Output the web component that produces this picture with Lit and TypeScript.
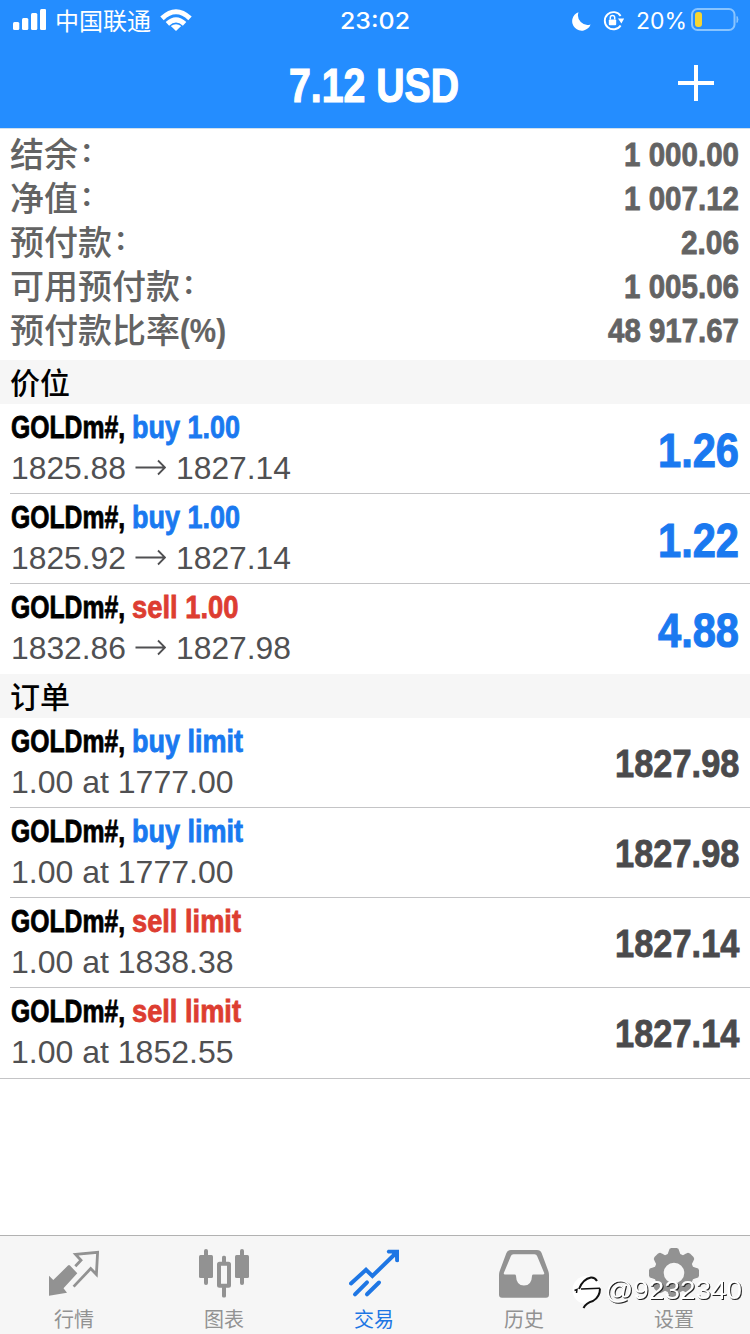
import { LitElement, html, svg, css } from "lit";
import { customElement, property } from "lit/decorators.js";

/** One run of text, set to an exact width so that condensed faces can be imitated. */
@customElement("fit-text")
class FitText extends LitElement {
  @property() text = "";
  @property({ type: Number }) size = 32;
  @property({ type: Number }) w = 100;
  @property({ type: Number }) h = 44;
  @property({ type: Number }) base = 34;
  static styles = css`
    :host { display: block; flex: none; }
    svg { display: block; overflow: visible; }
    text { fill: currentColor; stroke: currentColor; stroke-width: var(--embolden, 0); }
  `;
  render() {
    return html`<svg width=${this.w} height=${this.h}>
      <text x="0" y=${this.base} font-size=${this.size} textLength=${this.w} lengthAdjust="spacingAndGlyphs">${this.text}</text>
    </svg>`;
  }
}

const summary = [
  { label: "结余", value: "1 000.00", w: 115 },
  { label: "净值", value: "1 007.12", w: 115 },
  { label: "预付款", value: "2.06", w: 58 },
  { label: "可用预付款", value: "1 005.06", w: 115 },
  { label: "预付款比率", suffix: "(%)", value: "48 917.67", w: 131 },
];

const positions = [
  { side: "buy", vol: "1.00", w: 108, from: "1825.88", to: "1827.14", pl: "1.26" },
  { side: "buy", vol: "1.00", w: 108, from: "1825.92", to: "1827.14", pl: "1.22" },
  { side: "sell", vol: "1.00", w: 106.5, from: "1832.86", to: "1827.98", pl: "4.88" },
];

const orders = [
  { side: "buy", w: 111, at: "1777.00", price: "1827.98" },
  { side: "buy", w: 111, at: "1777.00", price: "1827.98" },
  { side: "sell", w: 109, at: "1838.38", price: "1827.14" },
  { side: "sell", w: 109, at: "1852.55", price: "1827.14" },
];

const gear = (() => {
  const pts: string[] = [];
  for (let i = 0; i < 8; i++) {
    const c = (i * Math.PI) / 4;
    for (const [d, r] of [[-0.32, 20], [-0.24, 22.4], [-0.18, 24.6], [-0.1, 25.2], [0.1, 25.2], [0.18, 24.6], [0.24, 22.4], [0.32, 20]]) {
      pts.push(`${(25 + r * Math.sin(c + d)).toFixed(2)} ${(25 - r * Math.cos(c + d)).toFixed(2)}`);
    }
  }
  return `M${pts.join("L")}ZM25 14.7a10.3 10.3 0 1 0 0 20.6a10.3 10.3 0 1 0 0-20.6Z`;
})();

const tabs = [
  {
    label: "行情",
    icon: svg`<path fill="currentColor" d="M0 27.7L4.3 32L19 17.6Q20 16.6 21 17.6L28.3 25.3L14.5 40.2L18 44.7L0 47.7Z"/>
      <path fill="none" stroke="currentColor" stroke-width="2.8" d="M26.3 18.2L32 12.2L26.6 6.4L48.6 4.4L47.4 26.4L41.7 20.6L24.6 38.6"/>`,
  },
  {
    label: "图表",
    icon: svg`<g fill="currentColor"><rect x="0" y="7" width="14" height="23" rx="1.5"/><rect x="5" y="1" width="4" height="36" rx="2"/>
      <rect x="36" y="7" width="14" height="23" rx="1.5"/><rect x="41" y="1" width="4" height="36" rx="2"/>
      <rect x="23" y="7.7" width="4" height="8" rx="1.5"/><rect x="23" y="38" width="4" height="11.5" rx="1.5"/></g>
      <rect x="20" y="15.7" width="10" height="22" rx=".5" fill="none" stroke="currentColor" stroke-width="4"/>`,
  },
  {
    label: "交易",
    active: true,
    icon: svg`<g fill="none" stroke="currentColor" stroke-width="4" stroke-linecap="round"><path d="M2 35.5L17 21.8L23.4 28L46 6"/><path d="M6 46.3L18 34.3M18 46.3L30 34.5"/></g>
      <path fill="currentColor" d="M39 1.8L50 1.8L50 13.5Q48 15 46.2 13.2L46 8.5L42.8 5.4L39 5.6Q36.5 3.6 39 1.8Z"/>`,
  },
  {
    label: "历史",
    icon: svg`<path fill="currentColor" fill-rule="evenodd" d="M12 2H38Q41.5 2 42.6 5L49.3 23Q50 25 50 27V46.5Q50 49.7 47 49.7H3Q0 49.7 0 46.5V27Q0 25 .7 23L7.4 5Q8.5 2 12 2ZM14.5 6.3Q12.5 6.3 11.8 8.3L4.8 25Q4.5 26.6 6 26.6H15.5Q17 26.6 17 28Q17.3 37.5 25 37.5Q32.7 37.5 33 28Q33 26.6 34.5 26.6H44Q45.5 26.6 45.2 25L38.2 8.3Q37.5 6.3 35.5 6.3Z"/>`,
  },
  { label: "设置", icon: svg`<path fill="currentColor" fill-rule="evenodd" d=${gear}/>` },
];

@customElement("app-root")
class AppRoot extends LitElement {
  static styles = css`
    :host {
      display: block;
      width: 750px;
      font-family: "Liberation Sans", "Noto Sans CJK SC", sans-serif;
      color: #000;
    }
    .screen { display: flex; flex-direction: column; height: 1334px; background: #fff; overflow: hidden; }
    .top { background: #248dff; height: 129px; color: #fff; border-bottom: 1px solid #cfe0ee; box-sizing: border-box; flex: none; }
    .status { display: grid; grid-template-columns: 1fr auto 1fr; height: 40px; font-family: "Inter", "Noto Sans CJK SC", sans-serif; }
    .left, .right { display: flex; align-items: center; height: 40px; }
    .left { padding-left: 13px; }
    .carrier { font-size: 24px; line-height: 36px; padding-top: 3px; margin: 0 9px; font-weight: 400; }
    .right { justify-content: flex-end; padding-right: 11px; }
    .status svg { display: block; flex: none; }
    .time { font-weight: 500; }
    .moon { margin-right: 12px; }
    .lock { margin-right: 12px; }
    .battery { margin-left: 4px; }
    .nav { display: grid; grid-template-columns: 1fr auto 1fr; height: 87px; }
    .nav-title { grid-column: 2; font-weight: 700; margin-right: 3px; --embolden: 1.2px; }
    .plus { justify-self: end; margin: 25px 36px 0 0; display: block; }
    .bold { font-weight: 700; --embolden: 0.8px; }
    .summary { padding: 3px 11px 8px 10px; color: #636363; flex: none; }
    .line { display: flex; justify-content: space-between; height: 44px; }
    .label { display: flex; font-size: 34px; line-height: 42px; font-family: "Noto Sans CJK SC", sans-serif; font-weight: 500; white-space: nowrap; }
    .colon { font-size: 27px; font-weight: 700; margin: -2px 0 0 2px; }
    .suffix { font-family: "Liberation Sans", sans-serif; --embolden: 0.2px; }
    .section { height: 44px; padding-left: 10px; background: #f6f6f6; font: 500 30px/42px "Noto Sans CJK SC", sans-serif; flex: none; }
    .row { display: flex; justify-content: space-between; height: 89px; margin-left: 10px; padding-right: 11px; border-bottom: 1px solid #c4c4c6; flex: none; }
    .row.last-position { border-color: transparent; }
    .row.last-order { margin-left: 0; padding-left: 10px; height: 90px; }
    .name { display: flex; gap: 7.5px; height: 44px; padding-left: 0.5px; }
    .sub { display: flex; color: #505052; height: 45px; padding-left: 0.5px; }
    .arrow { display: block; margin: 10px 10px 0 9px; }
    .buy, .profit { color: #1a79f0; }
    .profit { --embolden: 1.1px; }
    .sell { color: #dd3d31; }
    .price { color: #4a4a4c; }
    .space { flex: 1; }
    .tabbar { position: relative; display: grid; grid-template-columns: repeat(5, 1fr); height: 98px; border-top: 1px solid #b2b2b2; background: #f6f6f6; flex: none; }
    .tab { display: flex; flex-direction: column; align-items: center; padding: 12px 2px 0 0; color: #929292; }
    .tab.active { color: #1e76e4; }
    .tab svg { display: block; }
    .tab-label { font: 400 20px/26px "Noto Sans CJK SC", sans-serif; margin-top: 8px; }
    .mark { position: absolute; left: 572px; top: 38px; display: flex; color: #fff; }
    .mark-text { filter: drop-shadow(1px 1px 0.4px #222); }
  `;

  render() {
    return html`<div class="screen">
      <header class="top">
        <div class="status">
          <div class="left">
            <svg width="33" height="40" fill="#fff"><rect y="22" width="6.3" height="8" rx="1.5"/><rect x="9" y="18" width="6.3" height="12" rx="1.5"/><rect x="18" y="13" width="6.3" height="17" rx="1.5"/><rect x="27" y="9" width="6.3" height="21" rx="1.5"/></svg>
            <span class="carrier">中国联通</span>
            <svg width="32" height="40" fill="none" stroke="#fff" stroke-width="5"><path d="M2 18.3Q16 5.2 30 18.3"/><path d="M7.4 23.8Q16 15.8 24.6 23.8"/><path d="M16 31L10.8 26Q16 22.4 21.2 26Z" fill="#fff" stroke="none"/></svg>
          </div>
          <fit-text class="time" text="23:02" size="22.5" w="70" h="40" base="28.5"></fit-text>
          <div class="right">
            <svg class="moon" width="19" height="40" fill="#fff"><path d="M6.5 12.2A9.5 9.5 0 1 0 18.6 24.4A9.6 9.6 0 0 1 6.5 12.2Z"/></svg>
            <svg class="lock" width="21" height="40"><path d="M17.6 16A8.6 8.6 0 1 0 17.6 25.4" fill="none" stroke="#fff" stroke-width="1.9"/><path d="M15 18.4H21.2L18.4 23.4Z" fill="#fff"/><rect x="5.8" y="19.4" width="7.4" height="5.8" rx="1" fill="#fff"/><path d="M7.3 19.5V17.6A2.2 2.2 0 0 1 11.7 17.6V19.5" fill="none" stroke="#fff" stroke-width="1.5"/></svg>
            <fit-text text="20%" size="22.5" w="51" h="40" base="28.5"></fit-text>
            <svg class="battery" width="48" height="40"><rect x="1" y="9" width="42.5" height="21" rx="5.5" fill="none" stroke="#88c4ff" stroke-width="2"/><path d="M46 16.5Q48 19.5 46 22.5Z" fill="#88c4ff" stroke="#88c4ff"/><rect x="4" y="12" width="7" height="15" rx="3" fill="#f6d531"/></svg>
          </div>
        </div>
        <div class="nav">
          <fit-text class="nav-title" text="7.12 USD" size="47.5" w="170" h="87" base="62"></fit-text>
          <svg class="plus" width="36" height="36"><path d="M18 0V36M0 18H36" stroke="#fff" stroke-width="4"/></svg>
        </div>
      </header>

      <section class="summary">
        ${summary.map((s) => html`<div class="line">
          <div class="label"><span>${s.label}</span>${s.suffix
            ? html`<fit-text class="bold suffix" text=${s.suffix} size="33" w="46" h="44" base="34"></fit-text>`
            : html`<span class="colon">：</span>`}</div>
          <fit-text class="bold" text=${s.value} size="33.5" w=${s.w} h="44" base="34"></fit-text>
        </div>`)}
      </section>

      <div class="section">价位</div>
      ${positions.map((p, i) => html`<div class="row ${i === positions.length - 1 ? "last-position" : ""}">
        <div>
          <div class="name bold">
            <fit-text text="GOLDm#," size="31.5" w="114"></fit-text>
            <fit-text class=${p.side} text="${p.side} ${p.vol}" size="31.5" w=${p.w}></fit-text>
          </div>
          <div class="sub">
            <fit-text text=${p.from} size="31.5" w="115" base="31"></fit-text>
            <svg class="arrow" width="31" height="18" fill="none" stroke="currentColor" stroke-width="1.8"><path d="M0.5 9.5H30M23 2.5L30 9.5L23 16.5"/></svg>
            <fit-text text=${p.to} size="31.5" w="115" base="31"></fit-text>
          </div>
        </div>
        <fit-text class="bold profit" text=${p.pl} size="47.5" w="81" h="89" base="63"></fit-text>
      </div>`)}

      <div class="section">订单</div>
      ${orders.map((o, i) => html`<div class="row ${i === orders.length - 1 ? "last-order" : ""}">
        <div>
          <div class="name bold">
            <fit-text text="GOLDm#," size="31.5" w="114"></fit-text>
            <fit-text class=${o.side} text="${o.side} limit" size="31.5" w=${o.w}></fit-text>
          </div>
          <div class="sub"><fit-text text="1.00 at ${o.at}" size="31.5" w="222.5" base="31"></fit-text></div>
        </div>
        <fit-text class="bold price" text=${o.price} size="38.5" w="124.5" h="89" base="59"></fit-text>
      </div>`)}

      <div class="space"></div>
      <nav class="tabbar">
        ${tabs.map((t) => html`<div class="tab ${t.active ? "active" : ""}"><svg width="50" height="50" viewBox="0 0 50 50">${t.icon}</svg><span class="tab-label">${t.label}</span></div>`)}
        <div class="mark">
          <svg width="33" height="36"><circle cx="14.5" cy="16" r="14" fill="#fff"/><g fill="none" stroke="#111"><path d="M7 15Q11 5 19 3.6Q23 3.5 25 7" stroke-width="2"/><path d="M2.5 16.5L5 15.5L4.5 19M9 15L28 14.2" stroke-width="1.5"/><path d="M28 14.5Q28 23 21 27Q14 29 11.5 34" stroke-width="2"/></g></svg>
          <fit-text class="mark-text" text="@9232340" size="26.5" w="137" h="36" base="25"></fit-text>
        </div>
      </nav>
    </div>`;
  }
}
